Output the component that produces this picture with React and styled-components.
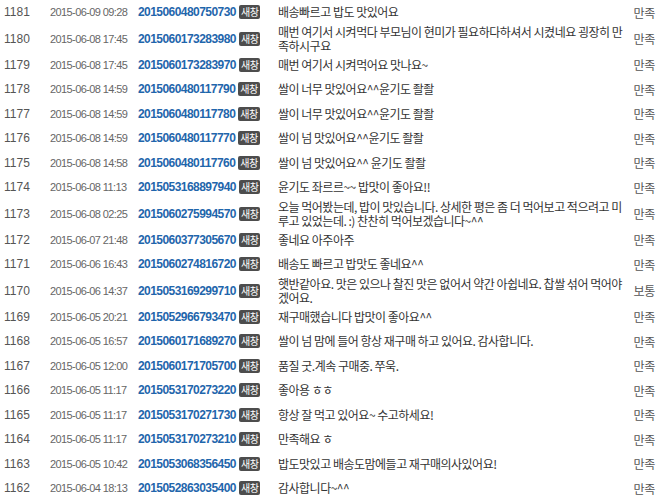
import React from 'react'
import styled, { createGlobalStyle } from 'styled-components'

const GlobalStyle = createGlobalStyle`
    html, body {
        margin: 0;
        padding: 0;
        background: #ffffff;
    }
    body {
        font-family: "Liberation Sans", "Noto Sans CJK KR", sans-serif;
    }
`

const ReviewList = styled.div`
    display: flex;
    flex-direction: column;
    width: 659px;
`

const Row = styled.div`
    display: grid;
    grid-template-columns: 46px 88px 140px 352px 1fr;
    align-items: center;
    min-height: ${props => props.$tall ? '28px' : '24.5px'};
    padding-left: 4px;
`

const No = styled.span`
    font-family: "Liberation Sans", sans-serif;
    font-size: 12px;
    color: #555;
`

const DateCell = styled.span`
    font-family: "Liberation Sans", sans-serif;
    font-size: 11px;
    letter-spacing: -0.6px;
    color: #666;
    white-space: nowrap;
`

const OrderCell = styled.span`
    display: flex;
    align-items: center;
    gap: 3px;
`

const OrderNo = styled.a`
    font-family: "Liberation Sans", sans-serif;
    font-size: 12px;
    font-weight: 700;
    letter-spacing: -0.55px;
    color: #1f66ac;
    text-decoration: none;
`

const NewWindow = styled.span`
    display: inline-block;
    height: 14px;
    line-height: 14px;
    padding: 0 2px;
    border-radius: 2px;
    background: #4d4d4d;
    color: #fff;
    font-family: "Noto Sans CJK KR", sans-serif;
    font-size: 10px;
    letter-spacing: -0.5px;
`

const Comment = styled.span`
    font-family: "Noto Sans CJK KR", sans-serif;
    font-size: 12px;
    line-height: 14px;
    letter-spacing: -0.5px;
    color: #333;
`

const Status = styled.span`
    font-family: "Noto Sans CJK KR", sans-serif;
    font-size: 12px;
    letter-spacing: -0.3px;
    color: #555;
    text-align: right;
    padding-right: 4px;
`

const reviews = [
    { no: 1181, date: '2015-06-09', time: '09:28', order: '2015060480750730', text: ['배송빠르고 밥도 맛있어요'], status: '만족' },
    { no: 1180, date: '2015-06-08', time: '17:45', order: '2015060173283980', text: ['매번 여기서 시켜먹다 부모님이 현미가 필요하다하셔서 시켰네요 굉장히 만', '족하시구요'], status: '만족' },
    { no: 1179, date: '2015-06-08', time: '17:45', order: '2015060173283970', text: ['매번 여기서 시켜먹어요 맛나요~'], status: '만족' },
    { no: 1178, date: '2015-06-08', time: '14:59', order: '2015060480117790', text: ['쌀이 너무 맛있어요^^윤기도 좔좔'], status: '만족' },
    { no: 1177, date: '2015-06-08', time: '14:59', order: '2015060480117780', text: ['쌀이 너무 맛있어요^^윤기도 좔좔'], status: '만족' },
    { no: 1176, date: '2015-06-08', time: '14:59', order: '2015060480117770', text: ['쌀이 넘 맛있어요^^윤기도 좔좔'], status: '만족' },
    { no: 1175, date: '2015-06-08', time: '14:58', order: '2015060480117760', text: ['쌀이 넘 맛있어요^^ 윤기도 좔좔'], status: '만족' },
    { no: 1174, date: '2015-06-08', time: '11:13', order: '2015053168897940', text: ['윤기도 좌르르~~ 밥맛이 좋아요!!'], status: '만족' },
    { no: 1173, date: '2015-06-08', time: '02:25', order: '2015060275994570', text: ['오늘 먹어봤는데, 밥이 맛있습니다. 상세한 평은 좀 더 먹어보고 적으려고 미', '루고 있었는데. :) 찬찬히 먹어보겠습니다~^^'], status: '만족' },
    { no: 1172, date: '2015-06-07', time: '21:48', order: '2015060377305670', text: ['좋네요 아주아주'], status: '만족' },
    { no: 1171, date: '2015-06-06', time: '16:43', order: '2015060274816720', text: ['배송도 빠르고 밥맛도 좋네요^^'], status: '만족' },
    { no: 1170, date: '2015-06-06', time: '14:37', order: '2015053169299710', text: ['햇반같아요. 맛은 있으나 찰진 맛은 없어서 약간 아쉽네요. 찹쌀 섞어 먹어야', '겠어요.'], status: '보통' },
    { no: 1169, date: '2015-06-05', time: '20:21', order: '2015052966793470', text: ['재구매했습니다 밥맛이 좋아요^^'], status: '만족' },
    { no: 1168, date: '2015-06-05', time: '16:57', order: '2015060171689270', text: ['쌀이 넘 맘에 들어 항상 재구매 하고 있어요. 감사합니다.'], status: '만족' },
    { no: 1167, date: '2015-06-05', time: '12:00', order: '2015060171705700', text: ['품질 굿.계속 구매중. 쭈욱.'], status: '만족' },
    { no: 1166, date: '2015-06-05', time: '11:17', order: '2015053170273220', text: ['좋아용 ㅎㅎ'], status: '만족' },
    { no: 1165, date: '2015-06-05', time: '11:17', order: '2015053170271730', text: ['항상 잘 먹고 있어요~ 수고하세요!'], status: '만족' },
    { no: 1164, date: '2015-06-05', time: '11:17', order: '2015053170273210', text: ['만족해요 ㅎ'], status: '만족' },
    { no: 1163, date: '2015-06-05', time: '10:42', order: '2015053068356450', text: ['밥도맛있고 배송도맘에들고 재구매의사있어요!'], status: '만족' },
    { no: 1162, date: '2015-06-04', time: '18:13', order: '2015052863035400', text: ['감사합니다~^^'], status: '만족' },
]

export default function App() {
    return (
        <>
            <GlobalStyle />
            <ReviewList>
                {reviews.map(r => (
                    <Row key={r.no} $tall={r.text.length > 1}>
                        <No>{r.no}</No>
                        <DateCell>{r.date} {r.time}</DateCell>
                        <OrderCell>
                            <OrderNo href="#">{r.order}</OrderNo>
                            <NewWindow>새창</NewWindow>
                        </OrderCell>
                        <Comment>
                            {r.text.map((line, i) => (
                                <React.Fragment key={i}>
                                    {i > 0 && <br />}
                                    {line}
                                </React.Fragment>
                            ))}
                        </Comment>
                        <Status>{r.status}</Status>
                    </Row>
                ))}
            </ReviewList>
        </>
    )
}
